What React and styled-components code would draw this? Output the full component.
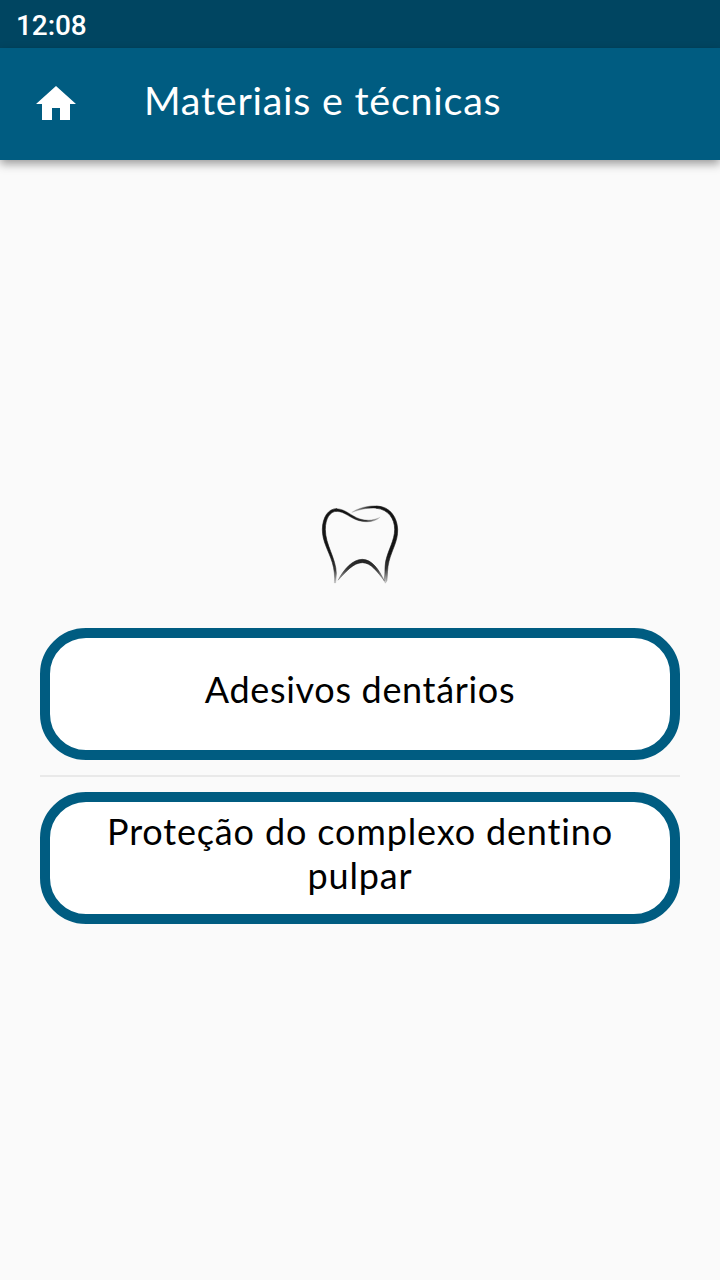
import React from "react";
import styled, { createGlobalStyle } from "styled-components";

const GlobalStyle = createGlobalStyle`
  * {
    box-sizing: border-box;
  }

  body {
    margin: 0;
    background: #fafafa;
  }
`;

const StyledScreen = styled.div`
  display: flex;
  flex-flow: column;
  width: 720px;
  height: 1280px;
  background: #fafafa;
  font-family: Lato, "Open Sans", sans-serif;
  overflow: hidden;
`;

const StyledStatusBar = styled.div`
  flex: none;
  height: 48px;
  padding: 2px 0 0 16px;
  background: #004561;
  color: #fff;
  font-family: Roboto, sans-serif;
  font-size: 28px;
  font-weight: 500;
  line-height: 47px;
  letter-spacing: -0.1px;
`;

const StyledAppBar = styled.header`
  display: flex;
  flex: none;
  align-items: center;
  height: 112px;
  padding-left: 32px;
  background: #005c81;
  box-shadow: 0 4px 9px rgba(0, 0, 0, 0.38);
`;

const StyledHomeButton = styled.button`
  width: 48px;
  height: 48px;
  padding: 0;
  border: none;
  background: none;
  color: #fff;
  cursor: pointer;
`;

const StyledHomeIcon = styled.svg`
  display: block;
  width: 48px;
  height: 48px;
  fill: currentColor;
`;

const StyledTitle = styled.h1`
  margin: 0 0 9px 64px;
  color: #fff;
  font-size: 39.5px;
  font-weight: 400;
  line-height: 48px;
  letter-spacing: ${(props) => props.$tracking}px;
  white-space: nowrap;
`;

const StyledContent = styled.main`
  display: flex;
  flex-flow: column;
  align-items: center;
  padding: 345px 40px 0;
`;

const StyledTooth = styled.svg`
  flex: none;
  width: 80px;
  height: 80px;
  margin-bottom: 43px;
`;

const StyledOption = styled.button`
  display: flex;
  flex: none;
  justify-content: center;
  align-items: center;
  width: 640px;
  height: 132px;
  padding: 0 40px 11px;
  border: 10px solid #005c81;
  border-radius: 46px;
  background: #fff;
  color: #000;
  font-family: inherit;
  font-size: 36px;
  line-height: 44px;
  letter-spacing: ${(props) => props.$tracking}px;
  text-align: center;
  cursor: pointer;
`;

const StyledDivider = styled.hr`
  width: 640px;
  height: 2px;
  margin: 15px 0;
  border: none;
  background: #e9e9e9;
`;

const HomeIcon = () => (
  <StyledHomeIcon viewBox="0 0 24 24">
    <path d="M10 20v-6h4v6h5v-8h3L12 3 2 12h3v8z" />
  </StyledHomeIcon>
);

const Tooth = () => (
  <StyledTooth viewBox="60 45 240 240" fill="none">
    <defs>
      <linearGradient
        id="tooth-roots"
        gradientUnits="userSpaceOnUse"
        x1="0"
        y1="190"
        x2="0"
        y2="283"
      >
        <stop offset="0" stopColor="#141414" />
        <stop offset="0.5" stopColor="#141414" stopOpacity="0.85" />
        <stop offset="1" stopColor="#141414" stopOpacity="0.1" />
      </linearGradient>
      <linearGradient
        id="tooth-fold"
        gradientUnits="userSpaceOnUse"
        x1="150"
        y1="0"
        x2="243"
        y2="0"
      >
        <stop offset="0" stopColor="#141414" />
        <stop offset="0.5" stopColor="#141414" stopOpacity="0.85" />
        <stop offset="1" stopColor="#141414" stopOpacity="0.1" />
      </linearGradient>
      <linearGradient
        id="tooth-crown"
        gradientUnits="userSpaceOnUse"
        x1="155"
        y1="0"
        x2="215"
        y2="0"
      >
        <stop offset="0" stopColor="#141414" stopOpacity="0.2" />
        <stop offset="1" stopColor="#141414" />
      </linearGradient>
    </defs>
    <g
      fill="url(#tooth-roots)"
      stroke="url(#tooth-roots)"
      strokeWidth="3"
      strokeOpacity="0.6"
      strokeLinejoin="round"
    >
      <path d="M67 118C68 82 84 56 110 56L110 64C90 64 76 86 76 118C76 165 108 205 109 250L107 279L103 279C105 260 103 238 97 218C85 180 67 155 67 118Z" />
      <path d="M293 118C292 85 272 49 230 48L230 55C264 58 284 86 284 118C284 151 265 178 257 214C253 236 257 256 251 270L256 280L261 272C263 254 261 237 267 214C276 178 294 154 293 118Z" />
      <path d="M114 271C132 237 158 208 187 208C216 208 238 240 253 273C232 245 213 218 187 218C160 218 137 246 114 271Z" />
    </g>
    <path
      d="M109 56C137 57 151 77 180 87C205 94 224 90 241 81C226 96 201 98 177 92C148 84 136 65 109 64Z"
      fill="url(#tooth-fold)"
      stroke="url(#tooth-fold)"
      strokeWidth="2"
      strokeOpacity="0.6"
    />
    <path
      d="M155 67C177 53 204 47 231 48L231 55C204 52 180 58 157 67Z"
      fill="url(#tooth-crown)"
      stroke="url(#tooth-crown)"
      strokeWidth="2"
      strokeOpacity="0.6"
    />
  </StyledTooth>
);

const App = () => (
  <>
    <GlobalStyle />
    <StyledScreen>
      <StyledStatusBar>12:08</StyledStatusBar>
      <StyledAppBar>
        <StyledHomeButton aria-label="Início">
          <HomeIcon />
        </StyledHomeButton>
        <StyledTitle $tracking={0.75}>Materiais e técnicas</StyledTitle>
      </StyledAppBar>
      <StyledContent>
        <Tooth />
        <StyledOption $tracking={0.68}>Adesivos dentários</StyledOption>
        <StyledDivider />
        <StyledOption $tracking={0.85}>
          Proteção do complexo dentino pulpar
        </StyledOption>
      </StyledContent>
    </StyledScreen>
  </>
);

export default App;
